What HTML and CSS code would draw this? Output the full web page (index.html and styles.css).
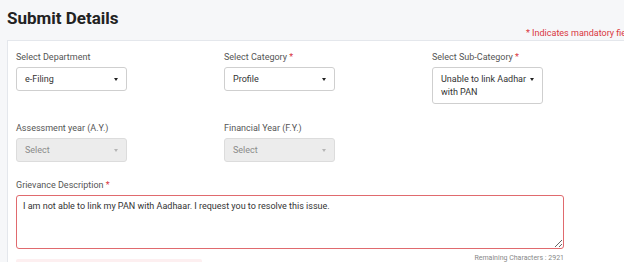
FILE: index.html
```html
<!DOCTYPE html>
<html>

<head>
  <meta charset="utf-8">
  <title>Submit Details</title>
  <link rel="stylesheet" href="styles.css">
</head>

<body>
  <div class="page">
    <div class="header">
      <h1>Submit Details</h1>
      <div class="mandatory-note">* Indicates mandatory fields</div>
    </div>

    <div class="card">
      <div class="field-grid">
        <div class="field">
          <label>Select Department</label>
          <div class="select">
            <span>e-Filing</span>
            <span class="caret"></span>
          </div>
        </div>
        <div class="field">
          <label>Select Category <span class="req">*</span></label>
          <div class="select">
            <span>Profile</span>
            <span class="caret"></span>
          </div>
        </div>
        <div class="field">
          <label>Select Sub-Category <span class="req">*</span></label>
          <div class="select multi">
            <span>Unable to link Aadhar with PAN</span>
            <span class="caret"></span>
          </div>
        </div>
      </div>

      <div class="field-grid second-row">
        <div class="field">
          <label>Assessment year (A.Y.)</label>
          <div class="select disabled">
            <span>Select</span>
            <span class="caret"></span>
          </div>
        </div>
        <div class="field">
          <label>Financial Year (F.Y.)</label>
          <div class="select disabled">
            <span>Select</span>
            <span class="caret"></span>
          </div>
        </div>
      </div>

      <div class="description">
        <label for="grievance">Grievance Description <span class="req">*</span></label>
        <textarea id="grievance">I am not able to link my PAN with Aadhaar. I request you to resolve this issue.</textarea>
        <div class="remaining">Remaining Characters : 2921</div>
        <!-- error message box, cut off at the bottom -->
        <div class="error-box"></div>
      </div>
    </div>
  </div>
</body>

</html>
```

FILE: styles.css
```css
body {
  margin: 0;
  background: #f6f7f9;
  font-family: Roboto, "Liberation Sans", Arial, sans-serif;
  overflow: hidden;
}

.page {
  width: 660px;
}

.header {
  display: flex;
  justify-content: space-between;
  align-items: flex-end;
  height: 40px;
  padding-left: 7px;
  padding-right: 22px;
}

h1 {
  margin: 0;
  align-self: flex-start;
  padding-top: 8px;
  font-size: 17px;
  line-height: 20px;
  font-weight: 700;
  color: #222;
}

.mandatory-note {
  font-size: 9px;
  line-height: 11px;
  padding-bottom: 1px;
  color: #d9363e;
}

.card {
  margin-left: 7px;
  background: #fff;
  border: 1px solid #e4e7ec;
  padding: 10px 8px 0;
}

.field-grid {
  display: grid;
  grid-template-columns: 208px 208px 208px;
}

.second-row {
  margin-top: 18px;
}

.field label,
.description label {
  display: block;
  font-size: 9px;
  line-height: 12px;
  color: #555;
  margin-bottom: 4px;
}

.req {
  color: #d9363e;
}

.select {
  box-sizing: border-box;
  width: 111px;
  height: 24px;
  border: 1px solid #cfcfcf;
  border-radius: 3px;
  padding: 0 8px;
  display: flex;
  align-items: center;
  justify-content: space-between;
  font-size: 9px;
  color: #333;
}

.select.multi {
  height: 37px;
  align-items: flex-start;
  padding-top: 5px;
  line-height: 13px;
}

.select.multi span:first-child {
  width: 86px;
}

.caret {
  width: 0;
  height: 0;
  border-left: 2.5px solid transparent;
  border-right: 2.5px solid transparent;
  border-top: 3px solid #222;
}

.select.multi .caret {
  margin-top: 5px;
}

.select.disabled {
  background: #ececec;
  border-color: #dcdcdc;
  color: #8a8a8a;
}

.select.disabled .caret {
  border-top-color: #b5b5b5;
}

.description {
  margin-top: 17px;
}

textarea {
  display: block;
  box-sizing: border-box;
  width: 548px;
  height: 54px;
  border: 1.5px solid #e06a6e;
  border-radius: 3px;
  padding: 4px 6px;
  font-family: Roboto, "Liberation Sans", Arial, sans-serif;
  font-size: 9px;
  line-height: 12px;
  color: #333;
  outline: none;
}

.remaining {
  width: 548px;
  text-align: right;
  font-size: 7px;
  line-height: 10px;
  margin-top: 4px;
  color: #888;
}

.error-box {
  width: 186px;
  height: 14px;
  margin-top: -4px;
  background: #fdeff0;
  border-radius: 2px;
}
```
